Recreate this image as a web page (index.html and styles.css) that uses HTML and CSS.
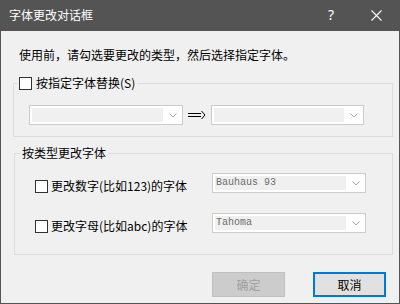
FILE: index.html
```html
<!DOCTYPE html>
<html lang="zh">
<head>
<meta charset="utf-8">
<link rel="stylesheet" href="styles.css">
</head>
<body>
<div class="window">
  <div class="titlebar">
    <span class="title">字体更改对话框</span>
    <span class="help">?</span>
    <span class="close"><svg width="11" height="11" viewBox="0 0 11 11"><path d="M0.5 0.5 L10.5 10.5 M10.5 0.5 L0.5 10.5" stroke="#fff" stroke-width="1.1" fill="none"/></svg></span>
  </div>
  <div class="content">
    <p class="intro">使用前，请勾选要更改的类型，然后选择指定字体。</p>
    <fieldset class="group group-one">
      <legend class="legend legend-check"><span class="check"></span><span>按指定字体替换(S)</span></legend>
      <div class="group-body replace">
        <div class="combo combo-wide"><span class="field"></span><span class="arrow"><svg width="8" height="5" viewBox="0 0 8 5"><path d="M0.5 0.5 L4 4 L7.5 0.5" stroke="#a8a8a8" fill="none"/></svg></span></div>
        <span class="to"><svg width="28" height="20" viewBox="0 0 28 20"><path d="M5 8.5 H18 M5 11.5 H18 M18.5 6 L22 10 L18.5 14" stroke="#000" stroke-width="1" fill="none"/></svg></span>
        <div class="combo"><span class="field"></span><span class="arrow"><svg width="8" height="5" viewBox="0 0 8 5"><path d="M0.5 0.5 L4 4 L7.5 0.5" stroke="#a8a8a8" fill="none"/></svg></span></div>
      </div>
    </fieldset>
    <fieldset class="group group-two">
      <legend class="legend legend-text">按类型更改字体</legend>
      <div class="group-body types">
        <div class="type-row">
          <label class="opt"><span class="check"></span><span>更改数字(比如123)的字体</span></label>
          <div class="combo combo-wide"><span class="field">Bauhaus 93</span><span class="arrow"><svg width="8" height="5" viewBox="0 0 8 5"><path d="M0.5 0.5 L4 4 L7.5 0.5" stroke="#a8a8a8" fill="none"/></svg></span></div>
        </div>
        <div class="type-row second">
          <label class="opt"><span class="check"></span><span>更改字母(比如abc)的字体</span></label>
          <div class="combo combo-wide"><span class="field">Tahoma</span><span class="arrow"><svg width="8" height="5" viewBox="0 0 8 5"><path d="M0.5 0.5 L4 4 L7.5 0.5" stroke="#a8a8a8" fill="none"/></svg></span></div>
        </div>
      </div>
    </fieldset>
    <div class="buttons">
      <span class="btn btn-disabled">确定</span>
      <span class="btn btn-default">取消</span>
    </div>
  </div>
</div>
</body>
</html>
```

FILE: styles.css
```css
* { box-sizing: border-box; }
html, body { margin: 0; padding: 0; background: #f0f0f0; }
body {
  font-family: "Noto Sans CJK SC", "Noto Sans", sans-serif;
  font-size: 12px;
  line-height: 16px;
  color: #000;
}
.window {
  width: 400px;
  height: 304px;
  border: 1px solid #545454;
  border-top: 0;
  background: #f0f0f0;
  display: flex;
  flex-direction: column;
  overflow: hidden;
}
.titlebar {
  height: 31px;
  background: #545454;
  color: #fff;
  display: flex;
  align-items: center;
  flex: none;
}
.title { padding-left: 8px; flex: 1; padding-bottom: 1px; }
.help {
  width: 30px;
  text-align: center;
  font-family: "Noto Sans", sans-serif;
  font-size: 14px;
  padding-bottom: 1px;
}
.close {
  width: 46px;
  margin-left: 7px;
  display: flex;
  justify-content: center;
  padding-bottom: 1px;
}
.close svg { display: block; }
.content { display: flex; flex-direction: column; }
.intro { margin: 16px 0 0 18px; }
.group {
  margin: 0;
  padding: 0;
  border: 1px solid #dcdcdc;
  min-width: 0;
}
.group-one { margin: 12px 6px 0 12px; }
.group-two { margin: 8px 6px 0 13px; }
.legend { padding: 0 2px; display: flex; align-items: center; }
.legend-check { margin-left: 3px; }
.legend-text { margin-left: 5px; }
.check {
  width: 13px;
  height: 13px;
  border: 1px solid #333;
  background: #fff;
  display: inline-block;
  flex: none;
}
.legend-check .check { margin-right: 4px; }
.replace {
  display: flex;
  padding: 14px 0 11px 15px;
}
.combo {
  width: 153px;
  height: 20px;
  border: 1px solid #cccccc;
  background: #fff;
  padding: 2px 0 2px 2px;
  display: flex;
  flex: none;
}
.combo-wide { width: 154px; }
.field {
  flex: 1;
  background: #f0f0f0;
  font-family: "Liberation Mono", monospace;
  font-size: 10px;
  line-height: 14px;
  color: #6d6d6d;
  padding-left: 1px;
}
.arrow {
  width: 19px;
  display: flex;
  align-items: center;
  justify-content: center;
  padding-top: 1px;
}
.arrow svg { display: block; }
.to { width: 28px; flex: none; }
.to svg { display: block; }
.types { padding: 12px 0 20px 20px; }
.type-row { display: flex; align-items: flex-start; }
.type-row.second { margin-top: 19px; }
.opt {
  width: 177px;
  display: flex;
  align-items: center;
  margin-top: 5px;
  flex: none;
}
.opt .check { margin-right: 3px; }
.buttons {
  display: flex;
  justify-content: flex-end;
  gap: 28px;
  margin-top: 17px;
  padding-right: 13px;
}
.btn {
  width: 73px;
  height: 25px;
  display: flex;
  align-items: center;
  justify-content: center;
}
.btn-disabled {
  background: #cccccc;
  border: 1px solid #bfbfbf;
  color: #a0a0a0;
}
.btn-default {
  background: #e1e1e1;
  border: 2px solid #0078d7;
  color: #000;
}
```
